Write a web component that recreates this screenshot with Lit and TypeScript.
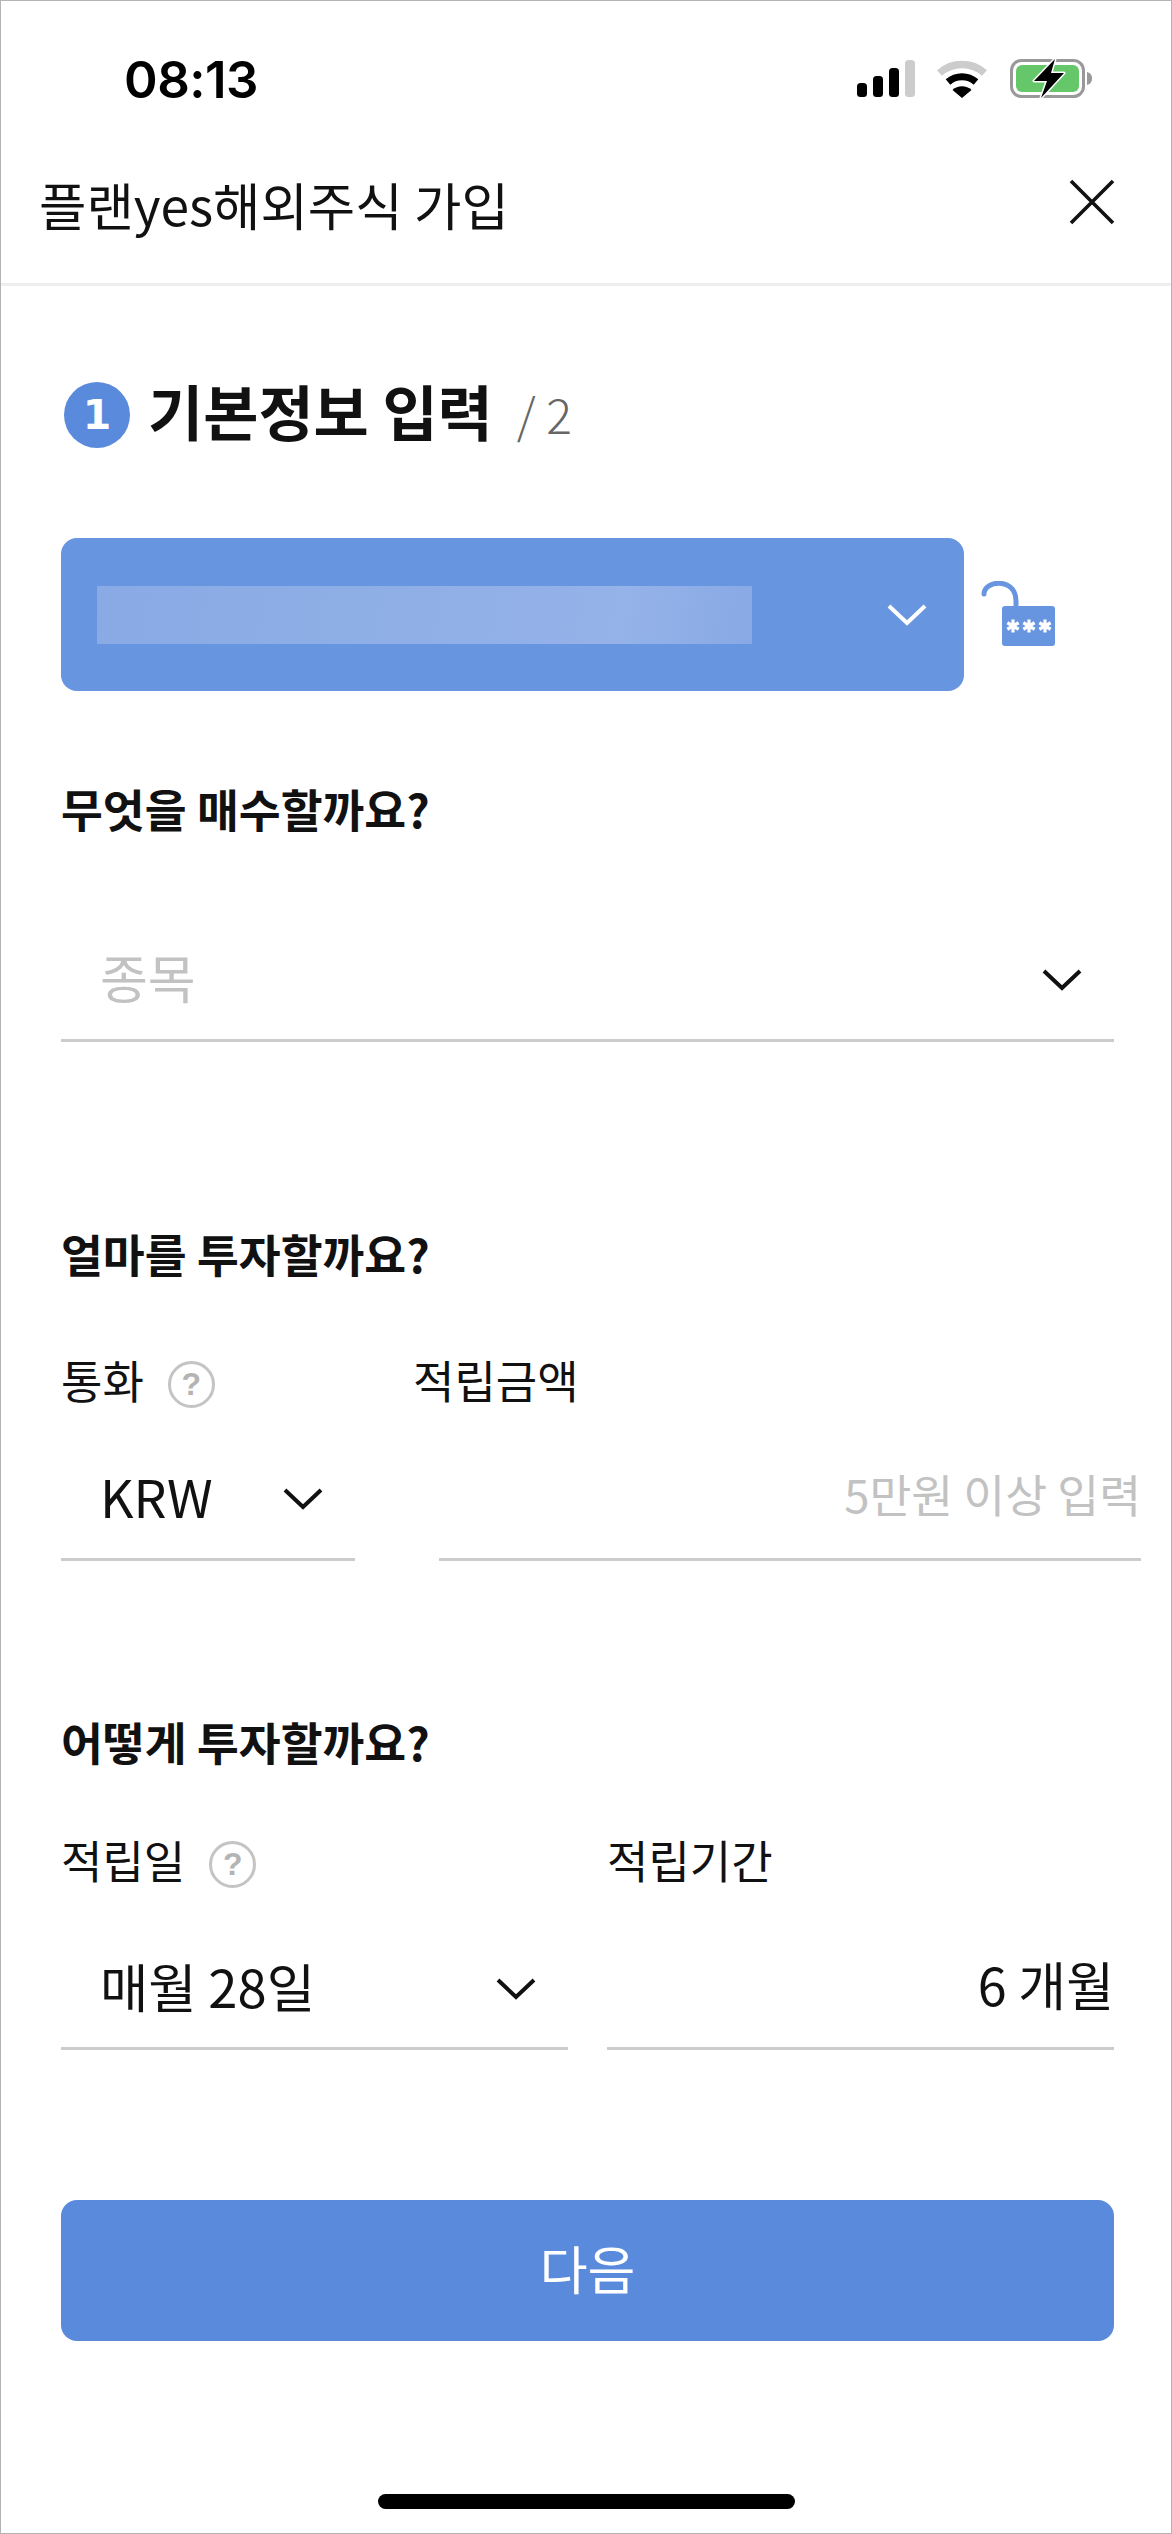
import { LitElement, html, css, svg } from "lit";
import { customElement } from "lit/decorators.js";

const chevron = (color: string) => html`<svg class="chev" viewBox="0 0 40 22" width="40" height="22"><path d="M2 2 L20 19 L38 2" fill="none" stroke=${color} stroke-width="4"/></svg>`;

const asterisk = (cx: number, cy: number) => {
  const r = 6.5;
  const lines = [0, 60, 120].map((a) => {
    const dx = r * Math.sin((a * Math.PI) / 180);
    const dy = r * Math.cos((a * Math.PI) / 180);
    return svg`<line x1=${cx - dx} y1=${cy - dy} x2=${cx + dx} y2=${cy + dy} stroke="#fff" stroke-width="3.2"/>`;
  });
  return lines;
};

@customElement("app-root")
export class AppRoot extends LitElement {
  static styles = css`
    :host {
      display: block;
      width: 1172px;
      height: 2534px;
      box-sizing: border-box;
      border: 1px solid #b4b4b4;
      background: #fff;
      color: #111;
      font-family: "Noto Sans CJK KR", "Noto Sans", sans-serif;
      overflow: hidden;
    }
    .status {
      height: 120px;
      display: flex;
      justify-content: space-between;
      align-items: flex-start;
      padding: 57px 0 0 123px;
      box-sizing: border-box;
    }
    .time {
      font-family: Inter, "Liberation Sans", sans-serif;
      font-weight: 600;
      font-size: 51px;
      letter-spacing: -0.5px;
      line-height: 44px;
      color: #000;
    }
    .status-icons {
      display: block;
      margin-right: 78px;
    }
    .header {
      height: 165px;
      box-sizing: border-box;
      border-bottom: 3px solid #eeeeee;
      display: flex;
      justify-content: space-between;
      align-items: center;
      padding: 0 56px 0 38px;
    }
    .header h1 {
      margin: 0;
      padding-top: 4px;
      font-size: 51.5px;
      font-weight: 400;
      line-height: 60px;
    }
    .close { display: block; }
    main {
      padding: 0 57px 0 60px;
    }
    .step {
      margin-top: 96px;
      height: 66px;
      display: flex;
      align-items: center;
    }
    .badge {
      width: 66px;
      height: 66px;
      margin-left: 3px;
      border-radius: 50%;
      background: #5a8adc;
      color: #fff;
      font-family: "DejaVu Sans", sans-serif;
      font-weight: 700;
      font-size: 41px;
      line-height: 66px;
      text-align: center;
    }
    .step h2 {
      margin: 0 0 0 18px;
      padding-bottom: 11px;
      font-size: 60px;
      font-weight: 700;
      line-height: 55px;
    }
    .step span.of {
      margin-left: 24px;
      padding-bottom: 4px;
      color: #666;
      font-size: 48px;
      font-weight: 300;
      line-height: 62px;
    }
    .account {
      margin-top: 90px;
      height: 153px;
      display: flex;
      align-items: flex-start;
    }
    .select {
      width: 903px;
      height: 153px;
      box-sizing: border-box;
      background: #6795e0;
      border-radius: 16px;
      display: flex;
      align-items: center;
      justify-content: space-between;
      padding: 0 37px 0 36px;
    }
    .mask {
      width: 655px;
      height: 58px;
      background: linear-gradient(100deg, #89aae5 0%, #8eaee6 40%, #95b2e9 80%, #88a9e5 100%);
    }
    .lock {
      display: block;
      margin: 43px 0 0 17px;
    }
    .q {
      margin: 98px 0 0;
      font-size: 45.5px;
      font-weight: 700;
      line-height: 38px;
      height: 44px;
    }
    .field {
      height: 121px;
      box-sizing: border-box;
      border-bottom: 3px solid #cccccc;
      display: flex;
      align-items: center;
      justify-content: space-between;
      font-size: 52px;
      line-height: 54px;
      padding: 0 32px 0 39px;
    }
    .field span { padding-bottom: 6px; }
    .field span.lift { padding-bottom: 10px; }
    .field span.date { padding-bottom: 8px; font-size: 52.5px; }
    .ph { color: #c2c2c2; }
    .field .small { font-size: 45.5px; padding-bottom: 12px; }
    .labels {
      display: flex;
      height: 52px;
      align-items: center;
      font-size: 45px;
      line-height: 52px;
    }
    .label { display: flex; align-items: center; gap: 24px; }
    .help {
      width: 41px;
      height: 41px;
      margin-top: 8px;
      border: 3px solid #c4c4c4;
      border-radius: 50%;
      color: #b4b4b4;
      font-family: "Liberation Sans", sans-serif;
      font-weight: 700;
      font-size: 32px;
      line-height: 41px;
      text-align: center;
      flex: none;
    }
    .fields { display: flex; }
    .right { justify-content: flex-end; padding: 0; }
    .button {
      margin-top: 150px;
      height: 141px;
      box-sizing: border-box;
      padding-bottom: 6px;
      background: #5a8adc;
      border-radius: 16px;
      color: #fff;
      font-size: 52px;
      line-height: 135px;
      text-align: center;
    }
    .home {
      display: flex;
      justify-content: center;
      margin-top: 153px;
    }
    .home div {
      width: 417px;
      height: 15px;
      border-radius: 8px;
      background: #000;
    }
  `;

  render() {
    return html`
      <div class="status">
        <div class="time">08:13</div>
        <svg class="status-icons" width="236" height="42" viewBox="857 58 236 42">
          <rect x="857" y="83" width="10" height="14" rx="3.5" fill="#000"/>
          <rect x="873" y="76" width="10" height="21" rx="3.5" fill="#000"/>
          <rect x="889" y="68" width="10" height="29" rx="3.5" fill="#000"/>
          <rect x="905" y="60" width="10" height="37" rx="3.5" fill="#cccccc"/>
          <path d="M939.5 73 A34 34 0 0 1 984.5 73" fill="none" stroke="#cccccc" stroke-width="7.5"/>
          <path d="M948 82 A21.5 21.5 0 0 1 976 82" fill="none" stroke="#000" stroke-width="7"/>
          <path d="M952.5 90 A14 14 0 0 1 971.5 90 L962 98 Z" fill="#000"/>
          <rect x="1011.5" y="60.5" width="72" height="36" rx="10" fill="none" stroke="#999999" stroke-width="3"/>
          <rect x="1016" y="65" width="63" height="27" rx="6" fill="#66c76a"/>
          <path d="M1087 72 C1091 73 1092 76 1092 78.5 C1092 81 1091 84 1087 85 Z" fill="#999999"/>
          <path d="M1055 59 L1034 81 L1047 81 L1041 98 L1064 73 L1051 73 Z" fill="#000" stroke="#fff" stroke-width="3" stroke-linejoin="round" paint-order="stroke"/>
        </svg>
      </div>
      <div class="header">
        <h1>플랜yes해외주식 가입</h1>
        <svg class="close" width="46" height="46" viewBox="0 0 46 46"><path d="M2 2 L44 44 M44 2 L2 44" stroke="#111" stroke-width="3.6" fill="none"/></svg>
      </div>
      <main>
        <div class="step">
          <div class="badge">1</div>
          <h2>기본정보 입력</h2>
          <span class="of">/ 2</span>
        </div>
        <div class="account">
          <div class="select">
            <div class="mask"></div>
            ${chevron("#fff")}
          </div>
          <svg class="lock" width="76" height="68" viewBox="0 0 76 68">
            <path d="M3 13 C3 -1 35 -4 35 20 V30" fill="none" stroke="#6795e0" stroke-width="5" stroke-linecap="round"/>
            <rect x="21" y="25" width="53" height="40" rx="3" fill="#6795e0"/>
            ${asterisk(32, 45)}${asterisk(48, 45)}${asterisk(64, 45)}
          </svg>
        </div>

        <div class="q">무엇을 매수할까요?</div>
        <div class="field" style="margin-top:88px">
          <span class="ph">종목</span>
          ${chevron("#111")}
        </div>

        <div class="q" style="margin-top:192px">얼마를 투자할까요?</div>
        <div class="labels" style="margin-top:76px">
          <div class="label" style="width:352px">통화 <span class="help">?</span></div>
          <div class="label">적립금액</div>
        </div>
        <div class="fields" style="margin-top:34px; margin-right:-27px">
          <div class="field" style="width:294px">
            <span>KRW</span>
            ${chevron("#111")}
          </div>
          <div class="field right" style="width:702px; margin-left:84px">
            <span class="ph small">5만원 이상 입력</span>
          </div>
        </div>

        <div class="q" style="margin-top:161px">어떻게 투자할까요?</div>
        <div class="labels" style="margin-top:68px">
          <div class="label" style="width:546px">적립일 <span class="help">?</span></div>
          <div class="label">적립기간</div>
        </div>
        <div class="fields" style="margin-top:44px">
          <div class="field" style="width:507px; height:120px">
            <span class="date">매월 28일</span>
            ${chevron("#111")}
          </div>
          <div class="field right" style="width:507px; height:120px; margin-left:39px">
            <span class="lift">6 개월</span>
          </div>
        </div>

        <div class="button">다음</div>
      </main>
      <div class="home"><div></div></div>
    `;
  }
}
